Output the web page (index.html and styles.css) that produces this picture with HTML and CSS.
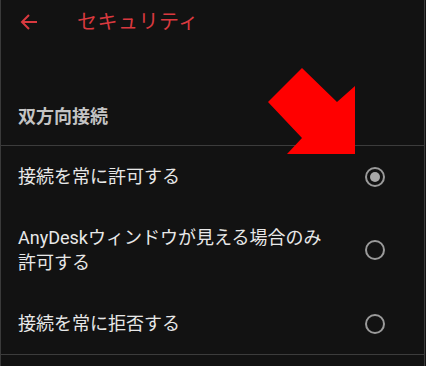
FILE: index.html
```html
<!DOCTYPE html>
<html lang="ja">
<head>
<meta charset="utf-8">
<link rel="stylesheet" href="styles.css">
</head>
<body>
<div class="screen">
  <header class="appbar">
    <svg class="back" width="18" height="18" viewBox="0 0 18 18"><path d="M17 9H2M9 2L2 9l7 7" fill="none" stroke="#d9393f" stroke-width="2"/></svg>
    <h1 class="title">セキュリティ</h1>
  </header>
  <div class="section">双方向接続</div>
  <div class="list">
    <div class="item">
      <div class="label">接続を常に許可する</div>
      <span class="radio on"></span>
    </div>
    <div class="item">
      <div class="label">AnyDeskウィンドウが見える場合のみ<br>許可する</div>
      <span class="radio"></span>
    </div>
    <div class="item">
      <div class="label">接続を常に拒否する</div>
      <span class="radio"></span>
    </div>
  </div>
  <svg class="pointer" width="426" height="366" viewBox="0 0 426 366"><polygon points="302,68 337,102 355,86 355,154 287,154 302,138 268,102" fill="#ff0000"/></svg>
</div>
</body>
</html>
```
FILE: styles.css
```css
html, body {
  margin: 0;
  padding: 0;
  background: #121212;
}
.screen {
  position: relative;
  width: 425px;
  height: 366px;
  box-sizing: border-box;
  border-left: 1px solid #3a3a3a;
  border-right: 1px solid #3a3a3a;
  background: #121212;
  font-family: Roboto, "Noto Sans CJK JP", sans-serif;
  overflow: hidden;
}
.appbar {
  height: 44px;
  display: flex;
  align-items: center;
  padding-left: 19px;
}
.back {
  display: block;
}
.title {
  margin: 0 0 0 39px;
  font-size: 20px;
  font-weight: 400;
  color: #d9393f;
  letter-spacing: 0.5px;
  line-height: 24px;
}
.section {
  padding: 61px 0 16px 17px;
  line-height: 24px;
  font-size: 18px;
  font-weight: 700;
  color: #c4c4c4;
  border-bottom: 1px solid #3c3c3c;
}
.list {
  border-bottom: 1px solid #3c3c3c;
}
.item {
  display: flex;
  align-items: center;
  justify-content: space-between;
  padding: 18px 39px 18px 17px;
}
.label {
  font-size: 18px;
  line-height: 25px;
  color: #e8e8e8;
}
.radio {
  width: 20px;
  height: 20px;
  box-sizing: border-box;
  border: 2px solid #9a9a9a;
  border-radius: 50%;
  display: flex;
  align-items: center;
  justify-content: center;
  flex: none;
}
.radio.on::after {
  content: "";
  width: 10px;
  height: 10px;
  border-radius: 50%;
  background: #a8a8a8;
}
.pointer {
  position: absolute;
  left: -1px;
  top: 0;
}
```
